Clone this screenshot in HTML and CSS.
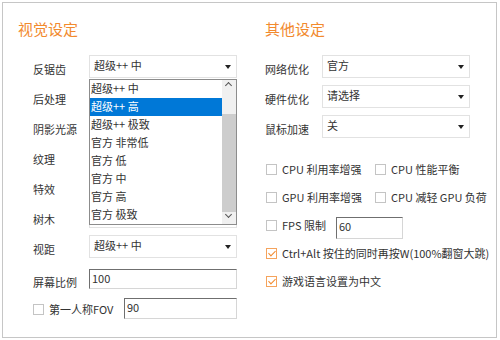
FILE: index.html
```
<!DOCTYPE html>
<html lang="zh-CN">
<head>
    <meta charset="UTF-8">
    <title>游戏设置</title>
    <link rel="stylesheet" href="styles.css">
</head>
<body>

    <div class="panel">
        <!-- 左侧：视觉设定 -->
        <section class="col col-left">
            <h2 class="title">视觉设定</h2>

            <div class="row">
                <span class="label">反锯齿</span>
                <div class="select open">
                    <span>超级++ 中</span><i class="caret"></i>
                    <div class="listbox">
                        <ul class="options">
                            <li>超级++ 中</li>
                            <li class="active">超级++ 高</li>
                            <li>超级++ 极致</li>
                            <li>官方 非常低</li>
                            <li>官方 低</li>
                            <li>官方 中</li>
                            <li>官方 高</li>
                            <li>官方 极致</li>
                        </ul>
                        <div class="scrollbar">
                            <span class="arrow up"></span>
                            <span class="thumb"></span>
                            <span class="arrow down"></span>
                        </div>
                    </div>
                </div>
            </div>
            <!-- 被展开列表遮住的下拉框 -->
            <div class="row"><span class="label">后处理</span><div class="select"><span></span><i class="caret"></i></div></div>
            <div class="row"><span class="label">阴影光源</span><div class="select"><span></span><i class="caret"></i></div></div>
            <div class="row"><span class="label">纹理</span><div class="select"><span></span><i class="caret"></i></div></div>
            <div class="row"><span class="label">特效</span><div class="select"><span></span><i class="caret"></i></div></div>
            <div class="row"><span class="label">树木</span><div class="select"><span></span><i class="caret"></i></div></div>
            <div class="row"><span class="label">视距</span><div class="select"><span>超级++ 中</span><i class="caret"></i></div></div>

            <div class="row row-input">
                <span class="label">屏幕比例</span>
                <div class="input wide">100</div>
            </div>
            <div class="row row-input row-fov">
                <label class="check"><i class="box"></i>第一人称FOV</label>
                <div class="input fov">90</div>
            </div>
        </section>

        <!-- 右侧：其他设定 -->
        <section class="col col-right">
            <h2 class="title">其他设定</h2>

            <div class="row"><span class="label">网络优化</span><div class="select"><span>官方</span><i class="caret"></i></div></div>
            <div class="row"><span class="label">硬件优化</span><div class="select"><span>请选择</span><i class="caret"></i></div></div>
            <div class="row"><span class="label">鼠标加速</span><div class="select"><span>关</span><i class="caret"></i></div></div>

            <div class="checks">
                <div class="check-row">
                    <label class="check half"><i class="box"></i>CPU 利用率增强</label>
                    <label class="check"><i class="box"></i>CPU 性能平衡</label>
                </div>
                <div class="check-row">
                    <label class="check half"><i class="box"></i>GPU 利用率增强</label>
                    <label class="check"><i class="box"></i>CPU 减轻 GPU 负荷</label>
                </div>
                <div class="check-row">
                    <label class="check fps"><i class="box"></i>FPS 限制</label>
                    <div class="input small">60</div>
                </div>
                <div class="check-row">
                    <label class="check"><i class="box on"></i>Ctrl+Alt 按住的同时再按W(100%翻窗大跳)</label>
                </div>
                <div class="check-row">
                    <label class="check"><i class="box on"></i>游戏语言设置为中文</label>
                </div>
            </div>
        </section>
    </div>

</body>
</html>
```

FILE: styles.css
```
:root {
    --orange: #f28a2e;
    --text: #333333;
    --line: #e2e2e2;
    --blue: #0078d7;
}

body {
    margin: 0;
    padding: 2px;
    background: #ffffff;
    font-family: "Noto Sans CJK SC", "Noto Sans", sans-serif;
    font-size: 11px;
    color: var(--text);
}

.panel {
    box-sizing: border-box;
    width: 495px;
    height: 336px;
    border: 1px solid #c6c6c6;
    display: flex;
}

.col {
    display: flex;
    flex-direction: column;
}

.col-left {
    width: 247px;
    padding-left: 15px;
    box-sizing: border-box;
}

.col-right {
    flex: 1;
    padding-left: 15px;
}

.title {
    margin: 16px 0 16px 0;
    font-size: 15px;
    font-weight: normal;
    line-height: 20px;
    color: var(--orange);
}

.row {
    display: flex;
    align-items: center;
    height: 23px;
    margin-bottom: 7px;
}

.col-left .row {
    padding-left: 15px;
}

.label {
    width: 56px;
    flex: none;
    padding-top: 5px;
    line-height: 16px;
}

.col-right .label {
    width: 57px;
}

/* 下拉框 */
.select {
    position: relative;
    box-sizing: border-box;
    width: 148px;
    height: 23px;
    border: 1px solid var(--line);
    padding: 0 4px;
    display: flex;
    align-items: center;
    justify-content: space-between;
    line-height: 16px;
    background: #fff;
}

.select span {
    margin-top: -3px;
}

.caret {
    width: 0;
    height: 0;
    border-left: 3px solid transparent;
    border-right: 3px solid transparent;
    border-top: 4px solid #222;
    margin-right: 1px;
}

/* 展开的列表 */
.listbox {
    position: absolute;
    left: -1px;
    top: 23px;
    box-sizing: border-box;
    width: 148px;
    height: 146px;
    border: 1px solid #8c8c8c;
    background: #fff;
    display: flex;
    z-index: 5;
}

.options {
    list-style: none;
    margin: 0;
    padding: 0;
    flex: 1;
}

.options li {
    height: 18px;
    line-height: 16px;
    padding-left: 1px;
    white-space: nowrap;
}

.options li.active {
    background: var(--blue);
    color: #fff;
}

.scrollbar {
    width: 14px;
    background: #f0f0f0;
    display: flex;
    flex-direction: column;
    align-items: stretch;
}

.scrollbar .arrow {
    height: 15px;
    position: relative;
}

.scrollbar .arrow::before {
    content: "";
    position: absolute;
    left: 4px;
    width: 4px;
    height: 4px;
    border-left: 1.5px solid #555;
    border-top: 1.5px solid #555;
}

.scrollbar .up::before {
    top: 6px;
    transform: rotate(45deg);
}

.scrollbar .down::before {
    top: 3px;
    transform: rotate(-135deg);
}

.scrollbar .thumb {
    margin-top: 22px;
    flex: 1;
    background: #cdcdcd;
}

/* 输入框 */
.input {
    box-sizing: border-box;
    height: 20px;
    border: 1px solid #d6d6d6;
    border-top-color: #6f6f6f;
    border-left-color: #6f6f6f;
    padding-left: 2px;
    line-height: 16px;
    background: #fff;
}

.input.wide {
    width: 148px;
}

.row-input {
    height: 20px;
}

.col-left .row-input {
    margin-top: 4px;
    margin-bottom: 9px;
}

.col-left .row-fov {
    margin-top: 0;
}

.row-fov .check {
    width: 91px;
    padding-top: 2px;
}

.input.fov {
    width: 113px;
    height: 21px;
}

/* 复选框 */
.checks {
    margin-top: 16px;
    display: flex;
    flex-direction: column;
    gap: 12px;
}

.check-row {
    display: flex;
    align-items: center;
    height: 16px;
    padding-left: 1px;
}

.check {
    display: flex;
    align-items: center;
    white-space: nowrap;
    line-height: 16px;
}

.check.half {
    width: 109px;
}

.check.fps {
    width: 70px;
}

.box {
    box-sizing: border-box;
    width: 11px;
    height: 11px;
    border: 1px solid #c4c4c4;
    margin-right: 5px;
    position: relative;
    flex: none;
}

.box.on {
    border-color: #f5a35c;
}

.box.on::after {
    content: "";
    position: absolute;
    left: 3px;
    top: 0px;
    width: 3px;
    height: 6px;
    border-right: 1.5px solid var(--orange);
    border-bottom: 1.5px solid var(--orange);
    transform: rotate(45deg);
}

.input.small {
    width: 67px;
    height: 22px;
    margin-top: 6px;
}
```
